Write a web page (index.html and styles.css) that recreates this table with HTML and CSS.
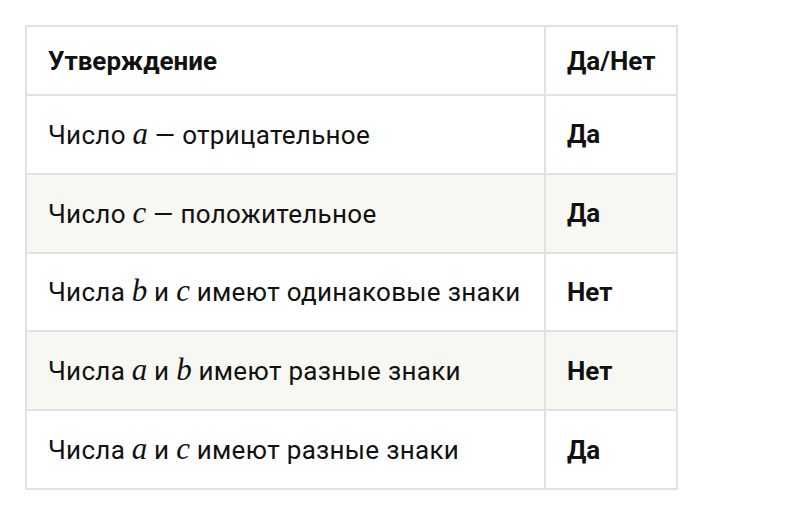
FILE: index.html
```html
<!DOCTYPE html>
<html lang="ru">
<head>
<meta charset="utf-8">
<link rel="stylesheet" href="styles.css">
</head>
<body>
<table class="tbl">
  <thead>
    <tr><th class="c1">Утверждение</th><th class="c2">Да/Нет</th></tr>
  </thead>
  <tbody>
    <tr><td class="c1">Число <span class="m">a</span> — отрицательное</td><td class="c2 ans">Да</td></tr>
    <tr class="alt"><td class="c1">Число <span class="m">c</span> — положительное</td><td class="c2 ans">Да</td></tr>
    <tr><td class="c1">Числа <span class="m">b</span> и <span class="m">c</span> имеют одинаковые знаки</td><td class="c2 ans">Нет</td></tr>
    <tr class="alt"><td class="c1">Числа <span class="m">a</span> и <span class="m">b</span> имеют разные знаки</td><td class="c2 ans">Нет</td></tr>
    <tr><td class="c1">Числа <span class="m">a</span> и <span class="m">c</span> имеют разные знаки</td><td class="c2 ans">Да</td></tr>
  </tbody>
</table>
</body>
</html>
```
FILE: styles.css
```css
html, body { margin: 0; padding: 0; background: #fff; }
body { padding: 25px 0 0 25px; font-family: Roboto, "Noto Sans", sans-serif; color: #111; }
.tbl { border-collapse: collapse; width: 653px; font-size: 26px; }
.tbl th, .tbl td { border: 2px solid #e2e2e2; text-align: left; padding: 0 18px 0 21px; line-height: 30px; }
.tbl th { height: 67px; font-weight: 700; }
.tbl td { height: 76.8px; font-weight: 400; }
.tbl td.c1 { letter-spacing: 0.3px; }
.tbl .c1 { width: 478px; }
.tbl .ans { font-weight: 700; }
.tbl tr.alt td { background: #f8f8f3; }
.m { font-family: "Liberation Serif", "DejaVu Serif", serif; font-style: italic; font-size: 31px; letter-spacing: 0; }
```
